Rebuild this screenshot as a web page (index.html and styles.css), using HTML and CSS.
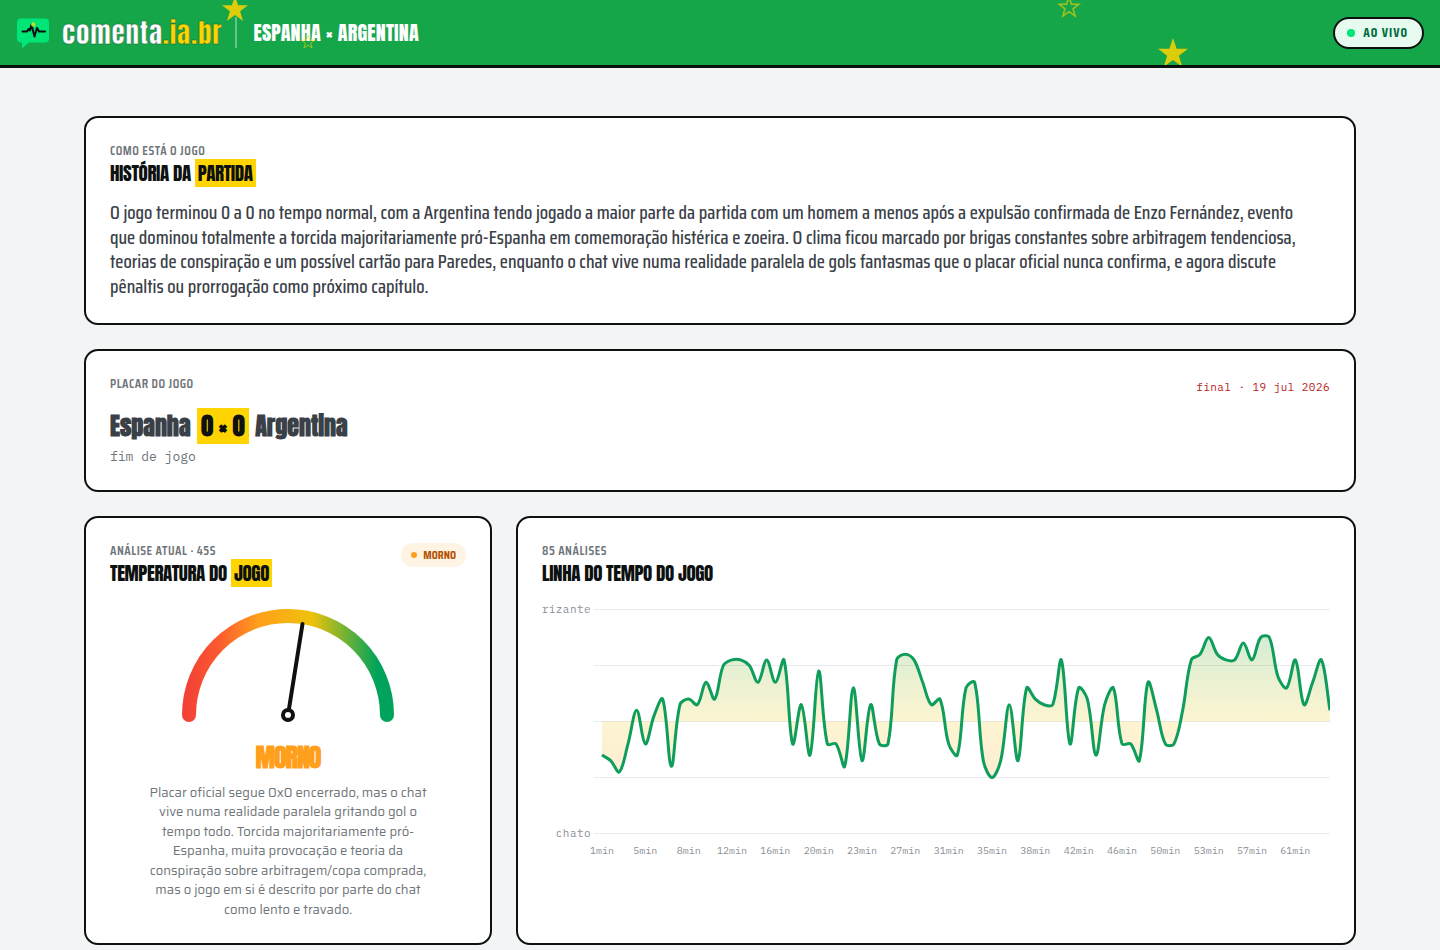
FILE: index.html
```html
<!DOCTYPE html>
<html lang="pt-br">
<head>
  <meta charset="UTF-8" />
  <meta name="viewport" content="width=device-width, initial-scale=1.0"/>
  <title>comenta.ia.br - Espanha × Argentina</title>
  <link rel="stylesheet" href="styles.css">
</head>
<body>
  <header class="topbar">
    <svg class="star star-1" viewBox="0 0 24 24"><path d="M12 0l2.9 8.6h9.1l-7.3 5.5 2.7 8.9-7.4-5.4L4.6 23l2.7-8.9L0 8.6h9.1z"/></svg>
    <svg class="star star-2 outline" viewBox="0 0 24 24"><path d="M12 2l2.5 7.2h7.5l-6 4.6 2.2 7.3-6.2-4.5-6.2 4.5 2.2-7.3-6-4.6h7.5z"/></svg>
    <svg class="star star-3 outline" viewBox="0 0 24 24"><path d="M12 2l2.5 7.2h7.5l-6 4.6 2.2 7.3-6.2-4.5-6.2 4.5 2.2-7.3-6-4.6h7.5z"/></svg>
    <svg class="star star-4" viewBox="0 0 24 24"><path d="M12 0l2.9 8.6h9.1l-7.3 5.5 2.7 8.9-7.4-5.4L4.6 23l2.7-8.9L0 8.6h9.1z"/></svg>
    <a class="brand" href="#">
      <svg class="brand-icon" viewBox="0 0 34 34">
        <path d="M5 2.5h24a4 4 0 0 1 4 4v16a4 4 0 0 1-4 4H13l-7 6V26.500H5a4 4 0 0 1-4-4v-16a4 4 0 0 1 4-4z" fill="#00e676"/>
        <path d="M6.500 15.500h4.500l1.500-2.500 1.500 1.500 1.500-6 3 12 2.500-8.500 2 3.500H29" fill="none" stroke="#0d1110" stroke-width="2" stroke-linecap="round" stroke-linejoin="round"/>
        <circle cx="17.300" cy="8.500" r="2.200" fill="#b2e52a"/>
      </svg>
      <span class="brand-name">comenta<span class="brand-tld">.ia.br</span></span>
    </a>
    <span class="match-name">Espanha × Argentina</span>
    <span class="live"><i class="dot"></i>Ao vivo</span>
  </header>

  <main class="board">
    <section class="card full">
      <p class="label">Como está o jogo</p>
      <h2 class="title">História da <mark>partida</mark></h2>
      <p class="story">O jogo terminou 0 a 0 no tempo normal, com a Argentina tendo jogado a maior parte da partida com um homem a menos após a expulsão confirmada de Enzo Fernández, evento que dominou totalmente a torcida majoritariamente pró-Espanha em comemoração histérica e zoeira. O clima ficou marcado por brigas constantes sobre arbitragem tendenciosa, teorias de conspiração e um possível cartão para Paredes, enquanto o chat vive numa realidade paralela de gols fantasmas que o placar oficial nunca confirma, e agora discute pênaltis ou prorrogação como próximo capítulo.</p>
    </section>

    <section class="card full">
      <div class="card-head">
        <p class="label">Placar do jogo</p>
        <span class="date">final · 19 jul 2026</span>
      </div>
      <p class="score">Espanha <mark>0 × 0</mark> Argentina</p>
      <p class="status">fim de jogo</p>
    </section>

    <section class="card gauge-card">
      <div class="card-head">
        <div>
          <p class="label">Análise atual · 45s</p>
          <h2 class="title">Temperatura do <mark>jogo</mark></h2>
        </div>
        <span class="chip"><i class="dot"></i>Morno</span>
      </div>
      <svg class="gauge" viewBox="0 0 240 132">
        <defs>
          <linearGradient id="heat" gradientUnits="userSpaceOnUse" x1="21" y1="0" x2="219" y2="0">
            <stop offset="0" stop-color="#f44336"/>
            <stop offset="0.15" stop-color="#fb5a2e"/>
            <stop offset="0.35" stop-color="#ff9f1c"/>
            <stop offset="0.62" stop-color="#eec20a"/>
            <stop offset="0.95" stop-color="#00a35c"/>
          </linearGradient>
        </defs>
        <path d="M21 116a99 99 0 0 1 198 0" fill="none" stroke="url(#heat)" stroke-width="14" stroke-linecap="round"/>
        <path d="M120 116L134.5 25" stroke="#0d1110" stroke-width="4" stroke-linecap="round"/>
        <circle cx="120" cy="116" r="5" fill="#fff" stroke="#0d1110" stroke-width="4"/>
      </svg>
      <p class="mood">Morno</p>
      <p class="summary">Placar oficial segue 0x0 encerrado, mas o chat vive numa realidade paralela gritando gol o tempo todo. Torcida majoritariamente pró-Espanha, muita provocação e teoria da conspiração sobre arbitragem/copa comprada, mas o jogo em si é descrito por parte do chat como lento e travado.</p>
    </section>

    <section class="card timeline-card">
      <p class="label">85 análises</p>
      <h2 class="title">Linha do tempo do jogo</h2>
      <svg class="timeline" id="timeline" viewBox="0 0 788 264" role="img" aria-label="Linha do tempo do jogo">
        <defs>
          <linearGradient id="area" gradientUnits="userSpaceOnUse" x1="0" y1="10" x2="0" y2="235">
            <stop offset="0" stop-color="#00a35c" stop-opacity="0.24"/>
            <stop offset="0.5" stop-color="#f0c400" stop-opacity="0.18"/>
            <stop offset="1" stop-color="#ff6b1c" stop-opacity="0.18"/>
          </linearGradient>
        </defs>
      </svg>
    </section>
  </main>
  <script src="script.js"></script>
</body>
</html>
```
FILE: styles.css
```css
* {
  box-sizing: border-box;
}
body {
  margin: 0;
  font-family: "Saira Condensed", "Roboto Condensed", "Roboto", sans-serif;
  background: #f3f4f6;
  color: #0d1110;
}
p, h2 {
  margin: 0;
}
mark {
  display: inline-block;
  background: #ffd400;
  color: #0d1110;
  padding: 0 3px;
}
.dot {
  width: 8px;
  height: 8px;
  border-radius: 50%;
  background: #00e676;
}
.topbar {
  position: relative;
  display: flex;
  align-items: center;
  height: 68px;
  padding: 0 16px;
  background: #16a64a;
  border-bottom: 3px solid #0d1110;
  overflow: hidden;
}
.star {
  position: absolute;
  fill: #ffd400;
  opacity: 0.85;
}
.star.outline {
  fill: none;
  stroke: #ffd400;
  stroke-width: 1.5;
  opacity: 0.6;
}
.star-1 {
  width: 26px;
  left: 222px;
  top: -4px;
}
.star-2 {
  width: 16px;
  left: 300px;
  top: 34px;
}
.star-3 {
  width: 24px;
  left: 1057px;
  top: -5px;
}
.star-4 {
  width: 30px;
  left: 1158px;
  top: 38px;
}
.brand {
  display: flex;
  align-items: center;
  gap: 12px;
  text-decoration: none;
}
.brand-icon {
  width: 34px;
  height: 34px;
}
.brand-name {
  font-family: "Anton", "Roboto Condensed", sans-serif;
  font-size: 27px;
  line-height: 40px;
  letter-spacing: 0.03em;
  color: #fff;
  -webkit-text-stroke: 1px rgba(13, 100, 50, 0.5);
}
.brand-tld {
  color: #ffd400;
}
.match-name {
  margin-left: 13px;
  padding-left: 16px;
  border-left: 2px solid rgba(255, 255, 255, 0.35);
  font-family: "Anton", "Roboto Condensed", sans-serif;
  font-size: 20px;
  line-height: 31px;
  letter-spacing: 0.01em;
  text-transform: uppercase;
  color: #fff;
}
.live {
  display: flex;
  align-items: center;
  gap: 8px;
  height: 32px;
  margin-left: auto;
  padding: 0 14px 0 12px;
  border: 2px solid #0d1110;
  border-radius: 16px;
  background: #e6faf0;
  color: #046c3f;
  font-size: 13px;
  font-weight: bold;
  letter-spacing: 1px;
  text-transform: uppercase;
}
.board {
  display: grid;
  grid-template-columns: repeat(12, 1fr);
  gap: 24px;
  max-width: 1320px;
  margin: 0 auto;
  padding: 48px 24px;
}
.card {
  background: #fff;
  border: 2px solid #0d1110;
  border-radius: 14px;
  padding: 24px;
}
.full {
  grid-column: span 12;
}
.gauge-card {
  grid-column: span 4;
}
.timeline-card {
  grid-column: span 8;
}
.card-head {
  display: flex;
  justify-content: space-between;
  align-items: flex-start;
}
.label {
  font-size: 13px;
  line-height: 17px;
  font-weight: 600;
  letter-spacing: 0.04em;
  text-transform: uppercase;
  color: #70757a;
}
.title {
  font-family: "Anton", "Roboto Condensed", sans-serif;
  font-size: 19px;
  line-height: 28px;
  font-weight: normal;
  letter-spacing: -0.02em;
  text-transform: uppercase;
}
.story {
  max-width: 1206px;
  margin-top: 13px;
  font-size: 19px;
  line-height: 1.3;
  font-weight: 500;
  color: #3a4047;
}
.date {
  font-family: "IBM Plex Mono", "Liberation Mono", monospace;
  font-size: 11px;
  line-height: 24px;
  letter-spacing: 0.04em;
  color: #b91c1c;
}
.score {
  margin-top: 9px;
  font-family: "Anton", "Roboto Condensed", sans-serif;
  font-size: 24px;
  line-height: 36px;
  font-weight: bold;
  color: #3a4047;
}
.score mark {
  margin: 0 1px;
  padding: 0 4px;
}
.status {
  margin-top: 4px;
  font-family: "IBM Plex Mono", "Liberation Mono", monospace;
  font-size: 13px;
  line-height: 18px;
  color: #70757a;
}
.chip {
  display: flex;
  align-items: center;
  gap: 6px;
  height: 24px;
  margin-top: 1px;
  padding: 0 10px;
  border-radius: 12px;
  background: #fff3e3;
  color: #b45309;
  font-size: 12px;
  font-weight: bold;
  text-transform: uppercase;
}
.chip .dot {
  width: 6px;
  height: 6px;
  background: #ff9f1c;
}
.gauge {
  display: block;
  width: 240px;
  max-width: 100%;
  margin: 12px auto 8px;
}
.mood {
  font-family: "Anton", "Roboto Condensed", sans-serif;
  font-size: 26px;
  line-height: 36px;
  font-weight: bold;
  letter-spacing: -1px;
  text-align: center;
  text-transform: uppercase;
  color: #ff9f1c;
}
.summary {
  max-width: 280px;
  margin: 8px auto 0;
  font-family: "Saira", "Roboto", sans-serif;
  font-size: 13px;
  line-height: 1.5;
  text-align: center;
  color: #70757a;
}
.timeline {
  display: block;
  width: 100%;
  margin-top: 12px;
}
.timeline text {
  font-family: "IBM Plex Mono", "Liberation Mono", monospace;
  font-size: 10px;
  fill: #8b9097;
}
.timeline .axis {
  font-size: 11px;
  letter-spacing: 0.04em;
}
.timeline .grid {
  stroke: #e8e9eb;
}
.timeline .line {
  fill: none;
  stroke: #0f9d5c;
  stroke-width: 3;
  stroke-linejoin: round;
}
@media (max-width: 900px) {
  .gauge-card, .timeline-card {
    grid-column: span 12;
  }
}
```
FILE: script.js
```js
const values = [
  -0.3, -0.35, -0.45, -0.2, 0.1, -0.2, 0.05, 0.2, -0.4, 0.15, 0.2, 0.15, 0.35, 0.2, 0.5,
  0.55, 0.55, 0.5, 0.35, 0.55, 0.35, 0.55, -0.2, 0.15, -0.3, 0.45, -0.2, -0.2, -0.4, 0.3,
  -0.35, 0.15, -0.2, -0.2, 0.55, 0.6, 0.55, 0.35, 0.15, 0.2, -0.2, -0.3, 0.3, 0.35, -0.35,
  -0.5, -0.35, 0.15, -0.35, 0.3, 0.2, 0.15, 0.15, 0.55, -0.2, 0.3, 0.2, -0.3, 0.15, 0.3,
  -0.2, -0.2, -0.35, 0.35, 0.1, -0.2, -0.2, 0.1, 0.55, 0.6, 0.75, 0.6, 0.55, 0.55, 0.7,
  0.55, 0.75, 0.75, 0.4, 0.3, 0.55, 0.15, 0.35, 0.55, 0.1
];
const minutes = [1, 5, 8, 12, 16, 20, 23, 27, 31, 35, 38, 42, 46, 50, 53, 57, 61];

const left = 60;
const right = 788;
const zero = 122.5;
const scale = 112;
const step = (right - left) / (values.length - 1);
const tension = 0.35;

const svg = document.getElementById('timeline');

function add(tag, attrs, text) {
  const el = document.createElementNS('http://www.w3.org/2000/svg', tag);
  for (const key in attrs) el.setAttribute(key, attrs[key]);
  if (text) el.textContent = text;
  svg.appendChild(el);
}

// grade e rótulos
[1, 0.5, 0, -0.5, -1].forEach((v) => {
  const y = zero - v * scale;
  add('line', { class: 'grid', x1: 52, x2: right, y1: y, y2: y });
});
add('text', { class: 'axis', x: 49, y: 14, 'text-anchor': 'end' }, 'rizante');
add('text', { class: 'axis', x: 49, y: 238, 'text-anchor': 'end' }, 'chato');
minutes.forEach((m, i) => {
  add('text', { x: left + i * 5 * step, y: 255, 'text-anchor': 'middle' }, m + 'min');
});

// curva suavizada
const points = values.map((v, i) => ({ x: left + i * step, y: zero - v * scale }));
const controls = points.map((p, i) => {
  const prev = points[i - 1] || p;
  const next = points[i + 1] || p;
  const d1 = Math.hypot(p.x - prev.x, p.y - prev.y);
  const d2 = Math.hypot(next.x - p.x, next.y - p.y);
  const a = tension * d1 / (d1 + d2);
  const b = tension * d2 / (d1 + d2);
  return {
    inX: p.x - a * (next.x - prev.x),
    inY: p.y - a * (next.y - prev.y),
    outX: p.x + b * (next.x - prev.x),
    outY: p.y + b * (next.y - prev.y)
  };
});

let curve = `M${points[0].x} ${points[0].y}`;
for (let i = 1; i < points.length; i++) {
  const c1 = controls[i - 1];
  const c2 = controls[i];
  curve += `C${c1.outX} ${c1.outY} ${c2.inX} ${c2.inY} ${points[i].x} ${points[i].y}`;
}

add('path', { d: `${curve}L${right} ${zero}L${left} ${zero}Z`, fill: 'url(#area)' });
add('path', { class: 'line', d: curve });
```
